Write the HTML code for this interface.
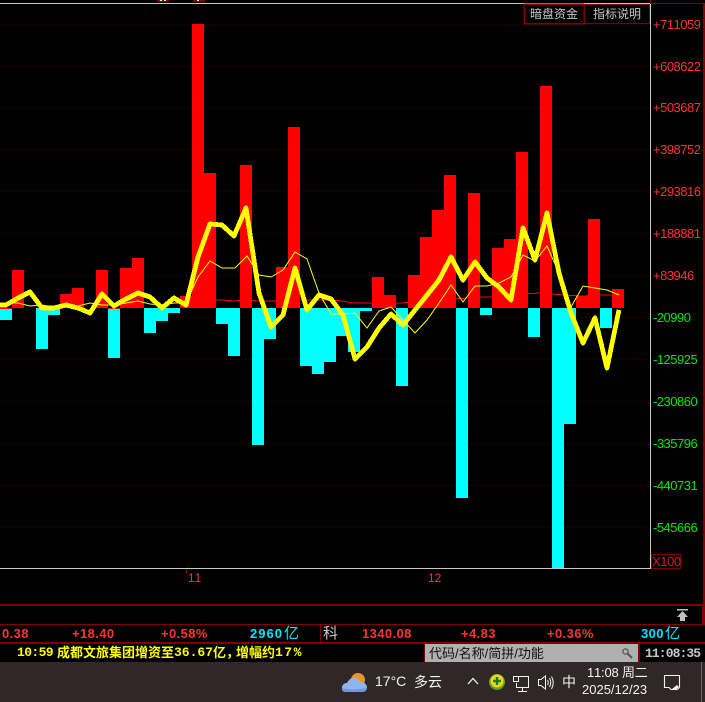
<!DOCTYPE html>
<html><head><meta charset="utf-8"><style>
html,body{margin:0;padding:0;background:#000;width:705px;height:702px;overflow:hidden}
#r{position:relative;width:705px;height:702px;overflow:hidden;background:#000;font-kerning:none;font-family:"Liberation Sans","WenQuanYi Zen Hei","Noto Sans CJK SC",sans-serif}
.t{position:absolute;white-space:nowrap;line-height:1}
.b{position:absolute}
.a{font-size:13px;left:653px;letter-spacing:-.5px}
.p{color:#ff3232}.g{color:#00e600}
.s{font-size:13px;font-weight:bold;top:627px;letter-spacing:.4px;color:#ff3232}
.c{color:#00e6ff}
.y{font-weight:bold;color:#ffff00;top:646px;font-size:13px}
.m{font-family:"Liberation Mono",monospace}
svg{position:absolute;left:0;top:0}
</style></head><body><div id="r">
<svg width="705" height="702" viewBox="0 0 705 702">
<g fill="none" stroke="#700000" stroke-width="1" stroke-dasharray="1 3" shape-rendering="crispEdges">
<path d="M2 24.5H650M2 66.5H650M2 107.5H650M2 149.5H650M2 191.5H650M2 233.5H650M2 275.5H650M2 317.5H650M2 359.5H650M2 401.5H650M2 443.5H650M2 485.5H650M2 527.5H650"/>
</g>
<g fill="#ff0000" shape-rendering="crispEdges">
<rect x="12" y="270" width="12" height="38"/><rect x="60" y="294" width="12" height="14"/><rect x="72" y="288" width="12" height="20"/><rect x="96" y="270" width="12" height="38"/><rect x="120" y="268" width="12" height="40"/><rect x="132" y="258" width="12" height="50"/><rect x="180" y="296" width="12" height="12"/><rect x="192" y="24" width="12" height="284"/><rect x="204" y="173" width="12" height="135"/><rect x="240" y="165" width="12" height="143"/><rect x="276" y="267" width="12" height="41"/><rect x="288" y="127" width="12" height="181"/><rect x="372" y="277" width="12" height="31"/><rect x="384" y="295" width="12" height="13"/><rect x="408" y="275" width="12" height="33"/><rect x="420" y="237" width="12" height="71"/><rect x="432" y="210" width="12" height="98"/><rect x="444" y="175" width="12" height="133"/><rect x="468" y="193" width="12" height="115"/><rect x="492" y="248" width="12" height="60"/><rect x="504" y="239" width="12" height="69"/><rect x="516" y="152" width="12" height="156"/><rect x="540" y="86" width="12" height="222"/><rect x="576" y="296" width="12" height="12"/><rect x="588" y="219" width="12" height="89"/><rect x="612" y="289" width="12" height="19"/>
<rect x="0" y="308" width="12" height="1"/><rect x="108" y="308" width="12" height="1"/>
</g>
<g fill="#00ffff" shape-rendering="crispEdges">
<rect x="0" y="309" width="12" height="11"/><rect x="36" y="308" width="12" height="41"/><rect x="48" y="308" width="12" height="7"/><rect x="108" y="309" width="12" height="49"/><rect x="144" y="308" width="12" height="25"/><rect x="156" y="308" width="12" height="13"/><rect x="168" y="308" width="12" height="5"/><rect x="216" y="308" width="12" height="16"/><rect x="228" y="308" width="12" height="48"/><rect x="252" y="308" width="12" height="137"/><rect x="264" y="308" width="12" height="31"/><rect x="300" y="308" width="12" height="58"/><rect x="312" y="308" width="12" height="66"/><rect x="324" y="308" width="12" height="54"/><rect x="336" y="308" width="12" height="28"/><rect x="348" y="308" width="12" height="44"/><rect x="360" y="308" width="12" height="3"/><rect x="396" y="308" width="12" height="78"/><rect x="456" y="308" width="12" height="190"/><rect x="480" y="308" width="12" height="7"/><rect x="528" y="308" width="12" height="29"/><rect x="552" y="308" width="12" height="260"/><rect x="564" y="308" width="12" height="116"/><rect x="600" y="308" width="12" height="20"/>
</g>
<polyline fill="none" stroke="#ff0000" stroke-width="1" shape-rendering="crispEdges" points="210,300 222,300 234,301 246,300 258,301 270,301 306,300 330,300 342,301 354,303 402,303 414,302 480,297 504,297 520,294 540,293 552,294 564,295 582,296 600,295 624,295"/>
<polyline fill="none" stroke="#ffff00" stroke-width="1" points="0,303 18,303 30,306 42,305 54,307 66,306 78,306 90,303 102,305 114,305 126,303 138,301 150,304 162,305 174,303 186,303 198,277 210,261 222,268 235,268 247,256 259,275 271,277 283,270 295,252 307,259 319,293 331,314 343,314 355,313 367,328 379,311 391,307 403,320 415,333 427,320 439,303 451,285 463,302 475,286 487,286 499,283 511,277 523,255 535,261 547,246 559,273 571,307 583,286 595,288 607,290 619,295"/>
<polyline fill="none" stroke="#ffff00" stroke-width="4.800" stroke-linejoin="round" shape-rendering="crispEdges" points="0,305 6,305 18,298 30,292 42,308 54,308 66,305 78,308 90,313 102,294 114,306 126,299 138,293 150,297 162,308 174,298 186,305 198,257 210,224 222,225 234,236 246,208 259,293 271,327 283,315 295,268 307,310 319,295 331,299 343,315 355,359 367,347 379,328 391,314 403,325 415,310 427,295 439,280 451,257 463,280 475,262 487,278 499,287 511,300 523,228 535,260 547,213 559,273 571,313 583,343 595,318 607,368 619,310"/>
<g shape-rendering="crispEdges">
<rect x="0" y="3" width="650" height="1" fill="#c8c8c8"/>
<rect x="650" y="3" width="55" height="1" fill="#800000"/>
<rect x="650" y="0" width="1" height="4" fill="#800000"/>
<rect x="650" y="4" width="1" height="565" fill="#c8c8c8"/>
<rect x="0" y="568" width="651" height="1" fill="#c8c8c8"/>
<rect x="703" y="3" width="2" height="601" fill="#800000"/>
<rect x="157" y="0" width="12" height="2" fill="#800000"/><rect x="160" y="0" width="2" height="1" fill="#fff"/><rect x="164" y="0" width="2" height="1" fill="#fff"/>
<rect x="193" y="0" width="12" height="2" fill="#800000"/><rect x="197" y="0" width="2" height="1" fill="#fff"/>
<rect x="186" y="570" width="1" height="3" fill="#a00000"/>
<rect x="524" y="4" width="60" height="20" fill="none" stroke="#800000" stroke-width="1"/>
<rect x="524.5" y="4.5" width="60" height="19" fill="none" stroke="#800000" stroke-width="1"/>
<rect x="584.5" y="4.5" width="65" height="19" fill="none" stroke="#800000" stroke-width="1"/>
<rect x="651.5" y="554.5" width="29" height="14" fill="none" stroke="#800000" stroke-width="1"/>
<rect x="0" y="604" width="705" height="2" fill="#800000"/>
<rect x="702" y="604" width="3" height="21" fill="#800000"/>
<rect x="0" y="624" width="705" height="1" fill="#800000"/>
<rect x="320" y="625" width="1" height="17" fill="#800000"/>
<rect x="0" y="642" width="705" height="2" fill="#800000"/>
<rect x="677" y="609" width="11" height="1.500" fill="#c0c0c0"/>
<rect x="424" y="644" width="214" height="18" fill="#b0b0b0"/>
<rect x="424" y="644" width="1" height="18" fill="#800000"/>
<rect x="638" y="644" width="2" height="18" fill="#800000"/>
<rect x="0" y="662" width="705" height="40" fill="#2f2826"/>
<rect x="701" y="662" width="1" height="40" fill="#6a6462"/>
</g>
<polygon fill="#c0c0c0" points="682.500,611 688,617 685,617 685,621 680,621 680,617 677,617" />
<g fill="none" stroke="#555" stroke-width="1.300"><circle cx="625.500" cy="651.500" r="2.600"/><path d="M627.500 653.500L632 658" stroke-width="2"/></g>
<circle cx="358" cy="680" r="7" fill="#e8952a"/>
<path d="M346 692Q341 692 342 687Q343 683 347 683Q350 677 355 678Q359 679 360 682Q366 682 367 687Q367 692 362 692Z" fill="#8fb6ec"/>
<path d="M346 692Q342 692 342 688Q350 691 367 688Q366 692 362 692Z" fill="#6d97dc"/>
<path d="M468 684L473 678.500L478 684" fill="none" stroke="#eee" stroke-width="1.300"/>
<circle cx="497" cy="682" r="8" fill="#5ea02f"/>
<circle cx="497" cy="681" r="6.500" fill="#f4d80e"/>
<path d="M497 677V685M493 681H501" stroke="#1a7a2a" stroke-width="2.400"/>
<g fill="none" stroke="#f2f2f2" stroke-width="1" shape-rendering="crispEdges">
<path d="M516.500 676.500H528.500V687.500H516.500V683M522.500 687.500V691.500M518 691.500H527"/>
<rect x="513.500" y="676.500" width="5" height="5"/>
<path d="M538.500 679.500H541L545.500 676V689L541 685.500H538.500Z"/>
</g>
<g fill="none" stroke="#f2f2f2" stroke-width="1">
<path d="M547.500 680Q549 682.500 547.500 685M549.500 678Q552 682.500 549.500 687M551.500 676.500Q555 682.500 551.500 689"/>
<path d="M664.500 675.500H679.500V687Q678 690 675 689.500H671L669 687.500H664.500Z" stroke-width="1.100"/>
</g>
<path d="M672 689L677 685L679 687L675 690Z" fill="#f2f2f2"/>
</svg>

<div class="t" style="left:530px;top:8px;font-size:12px;color:#c8c8c8">暗盘资金</div>
<div class="t" style="left:593px;top:8px;font-size:12px;color:#c8c8c8">指标说明</div>

<div class="t a p" style="top:18px">+711059</div>
<div class="t a p" style="top:60px">+608622</div>
<div class="t a p" style="top:101px">+503687</div>
<div class="t a p" style="top:143px">+398752</div>
<div class="t a p" style="top:185px">+293816</div>
<div class="t a p" style="top:227px">+188881</div>
<div class="t a p" style="top:269px">+83946</div>
<div class="t a g" style="top:311px">-20990</div>
<div class="t a g" style="top:353px">-125925</div>
<div class="t a g" style="top:395px">-230860</div>
<div class="t a g" style="top:437px">-335796</div>
<div class="t a g" style="top:479px">-440731</div>
<div class="t a g" style="top:521px">-545666</div>
<div class="t" style="left:652px;top:555px;font-size:13px;letter-spacing:-.4px;color:#c82020">X100</div>

<div class="t p" style="left:188px;top:572px;font-size:12px">11</div>
<div class="t p" style="left:428px;top:572px;font-size:12px">12</div>

<div class="t s" style="left:2px">0.38</div>
<div class="t s" style="left:72px">+18.40</div>
<div class="t s" style="left:161px">+0.58%</div>
<div class="t s c" style="left:250px;letter-spacing:1px">2960</div>
<div class="t c" style="left:284px;top:626px;font-size:15px;font-weight:normal">亿</div>
<div class="t" style="left:323px;top:626px;font-size:15px;color:#c8c8c8">科</div>
<div class="t s" style="left:362px">1340.08</div>
<div class="t s" style="left:461px">+4.83</div>
<div class="t s" style="left:547px">+0.36%</div>
<div class="t s c" style="left:641px">300</div>
<div class="t c" style="left:665px;top:626px;font-size:15px;font-weight:normal">亿</div>

<div class="t y m" style="left:17px;letter-spacing:-.6px">10:59</div>
<div class="t y" style="left:57px">成都文旅集团增资至</div>
<div class="t y m" style="left:174px">36.67</div>
<div class="t y" style="left:213px">亿，</div>
<div class="t y" style="left:236px">增幅约</div>
<div class="t y m" style="left:275px;letter-spacing:1.500px">17%</div>

<div class="t" style="left:429px;top:647px;font-size:13px;color:#111">代码/名称/简拼/功能</div>
<div class="t m" style="left:645px;top:647px;font-size:13px;font-weight:bold;color:#c8c8c8;letter-spacing:-.9px">11:08:35</div>

<div class="t" style="left:375px;top:674px;font-size:14px;color:#f2f2f2">17°C</div>
<div class="t" style="left:414px;top:675px;font-size:14px;color:#f2f2f2">多云</div>
<div class="t" style="left:562px;top:675px;font-size:14px;color:#f2f2f2">中</div>
<div class="t" style="left:587px;top:666px;font-size:13px;letter-spacing:-.2px;color:#f2f2f2">11:08 周二</div>
<div class="t" style="left:582px;top:683px;font-size:13px;color:#f2f2f2">2025/12/23</div>
</div></body></html>
